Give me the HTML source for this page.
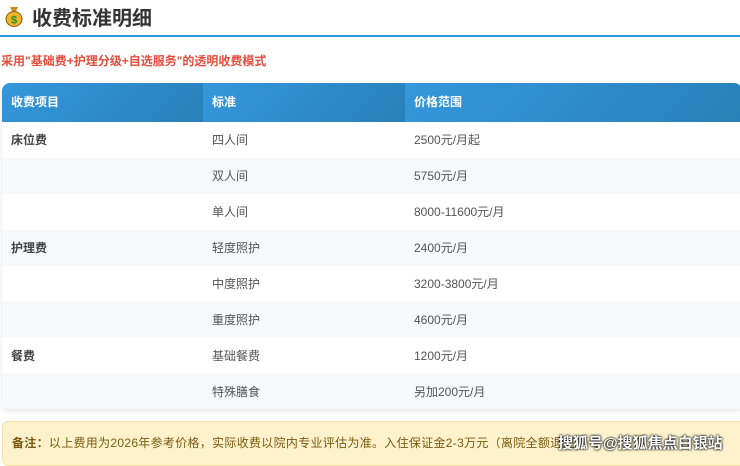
<!DOCTYPE html>
<html><head><meta charset="utf-8"><style>
*{margin:0;padding:0;box-sizing:border-box}
body{width:740px;height:459px;overflow:hidden;background:#fff;font-family:"Liberation Sans","Noto Sans CJK SC",sans-serif;position:relative}
.title{position:absolute;left:4px;top:1px;height:30px;display:flex;align-items:center;font-size:20px;font-weight:bold;color:#333}
.line{position:absolute;left:0;top:35px;width:740px;height:2px;background:#3498db}
.sub{position:absolute;left:1px;top:52px;font-size:12px;font-weight:bold;color:#e74c3c}
.tbl{position:absolute;left:2px;top:83px;width:740px;border-radius:8px 8px 6px 6px;overflow:hidden;box-shadow:0 2px 6px rgba(0,0,0,.1)}
.row{display:flex;height:35.9px;align-items:center;font-size:12px;color:#555}
.row div{padding-left:9px}
.c1{width:201px}.c2{width:202px}.c3{flex:1}
.hd{height:39px;color:#fff;font-weight:bold}
.hd div{height:39px;line-height:39px;background:linear-gradient(135deg,#3498db,#2980b9)}
.row.g{background:#f7f8fa}
.b{font-weight:bold;color:#444}
.note{position:absolute;left:2px;top:421px;width:745px;height:45px;background:#fdf2cc;border:1px solid #f5e2a0;border-radius:6px;font-size:12px;color:#7a5a10;padding:12px 0 0 9px;white-space:nowrap;letter-spacing:0.3px}
.wm{position:absolute;left:558px;top:432px;font-size:15px;color:#fff;font-weight:bold;text-shadow:0 0 2px #000,0 0 2px #000}
</style></head><body>
<div class="title"><svg width="20" height="22" viewBox="0 0 20 22"><path d="M6 2h8l-2 4h-4z" fill="#c98a1e"/><ellipse cx="10" cy="14" rx="8" ry="7.5" fill="#f1b32a" stroke="#8a5a10" stroke-width="1"/><text x="10" y="18.5" font-size="11" text-anchor="middle" fill="#2a8a2a" font-weight="bold" font-family="Liberation Sans">$</text></svg><span style="margin-left:8px">收费标准明细</span></div>
<div class="line"></div>
<div class="sub">采用"基础费+护理分级+自选服务"的透明收费模式</div>
<div class="tbl">
<div class="row hd"><div class="c1">收费项目</div><div class="c2">标准</div><div class="c3">价格范围</div></div>
<div class="row"><div class="c1 b">床位费</div><div class="c2">四人间</div><div class="c3">2500元/月起</div></div>
<div class="row g"><div class="c1"></div><div class="c2">双人间</div><div class="c3">5750元/月</div></div>
<div class="row"><div class="c1"></div><div class="c2">单人间</div><div class="c3">8000-11600元/月</div></div>
<div class="row g"><div class="c1 b">护理费</div><div class="c2">轻度照护</div><div class="c3">2400元/月</div></div>
<div class="row"><div class="c1"></div><div class="c2">中度照护</div><div class="c3">3200-3800元/月</div></div>
<div class="row g"><div class="c1"></div><div class="c2">重度照护</div><div class="c3">4600元/月</div></div>
<div class="row"><div class="c1 b">餐费</div><div class="c2">基础餐费</div><div class="c3">1200元/月</div></div>
<div class="row g"><div class="c1"></div><div class="c2">特殊膳食</div><div class="c3">另加200元/月</div></div>
</div>
<div class="note"><b style="color:#7a5a10">备注：</b>以上费用为2026年参考价格，实际收费以院内专业评估为准。入住保证金2-3万元（离院全额退还）</div>
<div class="wm">搜狐号@搜狐焦点白银站</div>
</body></html>
